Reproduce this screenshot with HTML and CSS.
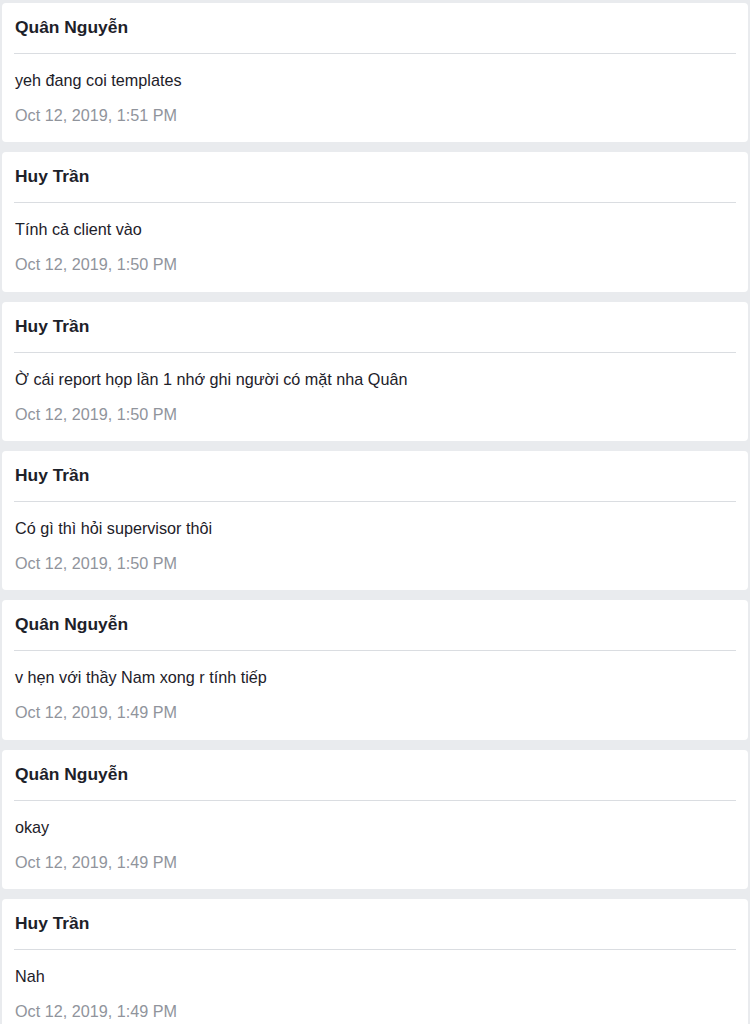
FILE: index.html
```html
<!DOCTYPE html>
<html>
<head>
<meta charset="utf-8">
<link rel="stylesheet" href="styles.css">
</head>
<body>
<div class="list">
  <div class="card">
    <div class="name">Quân Nguyễn</div>
    <div class="sep"></div>
    <div class="msg">yeh đang coi templates</div>
    <div class="time">Oct 12, 2019, 1:51 PM</div>
  </div>
  <div class="card">
    <div class="name">Huy Trần</div>
    <div class="sep"></div>
    <div class="msg">Tính cả client vào</div>
    <div class="time">Oct 12, 2019, 1:50 PM</div>
  </div>
  <div class="card">
    <div class="name">Huy Trần</div>
    <div class="sep"></div>
    <div class="msg">Ờ cái report họp lần 1 nhớ ghi người có mặt nha Quân</div>
    <div class="time">Oct 12, 2019, 1:50 PM</div>
  </div>
  <div class="card">
    <div class="name">Huy Trần</div>
    <div class="sep"></div>
    <div class="msg">Có gì thì hỏi supervisor thôi</div>
    <div class="time">Oct 12, 2019, 1:50 PM</div>
  </div>
  <div class="card">
    <div class="name">Quân Nguyễn</div>
    <div class="sep"></div>
    <div class="msg">v hẹn với thầy Nam xong r tính tiếp</div>
    <div class="time">Oct 12, 2019, 1:49 PM</div>
  </div>
  <div class="card">
    <div class="name">Quân Nguyễn</div>
    <div class="sep"></div>
    <div class="msg">okay</div>
    <div class="time">Oct 12, 2019, 1:49 PM</div>
  </div>
  <div class="card">
    <div class="name">Huy Trần</div>
    <div class="sep"></div>
    <div class="msg">Nah</div>
    <div class="time">Oct 12, 2019, 1:49 PM</div>
  </div>
</div>
</body>
</html>
```
FILE: styles.css
```css
html, body {
  margin: 0;
  padding: 0;
  background: #e9ebee;
  font-family: "Liberation Sans", Arial, sans-serif;
}
.list {
  display: flex;
  flex-direction: column;
  gap: 10px;
  padding: 3px 2px 0 2px;
}
.card {
  background: #ffffff;
  border-radius: 4px;
  padding: 12px 12px 17.33px 12px;
}
.name {
  font-size: 17.4px;
  font-weight: bold;
  line-height: 24px;
  color: #1d2129;
  padding-left: 1px;
}
.sep {
  height: 1px;
  background: #dadde1;
  margin: 14px 0 16px 0;
}
.msg {
  font-size: 16.2px;
  line-height: 20px;
  color: #1d2129;
  padding-left: 1px;
}
.time {
  font-size: 16.2px;
  line-height: 20px;
  color: #90949c;
  margin-top: 15px;
  padding-left: 1px;
}
```
